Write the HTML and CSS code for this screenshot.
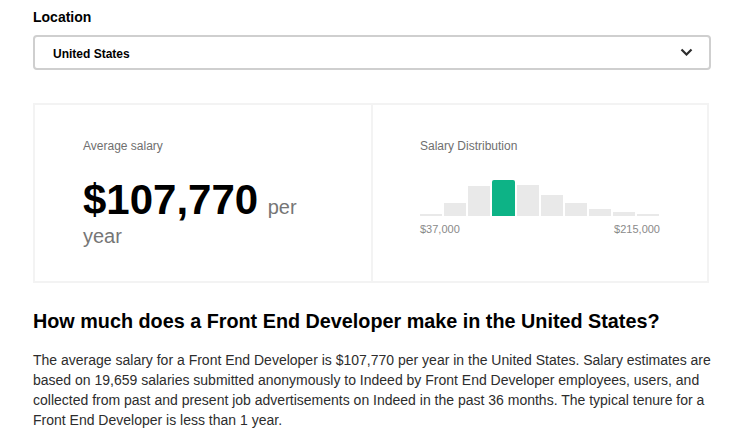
FILE: index.html
```html
<!DOCTYPE html>
<html>
<head>
<meta charset="utf-8">
<link rel="stylesheet" href="styles.css">
</head>
<body>
<div class="page">
  <div class="field">
    <div class="label">Location</div>
    <div class="select">
      <span class="select-value">United States</span>
      <svg class="chevron" width="13" height="8" viewBox="0 0 13 8"><path d="M1.5 1.5l5 5 5-5" fill="none" stroke="#2d2d2d" stroke-width="2.2"/></svg>
    </div>
  </div>

  <div class="card">
    <div class="panel">
      <div class="panel-title">Average salary</div>
      <div class="amount"><span class="amount-num">$107,770</span> <span class="amount-unit">per</span> <span class="amount-unit">year</span></div>
    </div>
    <div class="panel panel-right">
      <div class="panel-title">Salary Distribution</div>
      <div class="bars">
        <div class="bar" style="height:2px"></div>
        <div class="bar" style="height:13px"></div>
        <div class="bar" style="height:30px"></div>
        <div class="bar bar-active" style="height:36px"></div>
        <div class="bar" style="height:31px"></div>
        <div class="bar" style="height:21px"></div>
        <div class="bar" style="height:13px"></div>
        <div class="bar" style="height:7px"></div>
        <div class="bar" style="height:4px"></div>
        <div class="bar" style="height:2px"></div>
      </div>
      <div class="range"><span>$37,000</span><span>$215,000</span></div>
    </div>
  </div>

  <h2 class="heading">How much does a Front End Developer make in the United States?</h2>
  <p class="text">The average salary for a Front End Developer is $107,770 per year in the United States. Salary estimates are based on 19,659 salaries submitted anonymously to Indeed by Front End Developer employees, users, and collected from past and present job advertisements on Indeed in the past 36 months. The typical tenure for a Front End Developer is less than 1 year.</p>
</div>
</body>
</html>
```

FILE: styles.css
```css
* { box-sizing: border-box; }
body {
  margin: 0;
  background: #fff;
  font-family: "Liberation Sans", Arial, sans-serif;
  color: #2d2d2d;
}
.page {
  width: 678px;
  margin-left: 33px;
  padding-top: 8px;
}
.label {
  font-size: 14px;
  font-weight: bold;
  color: #000;
  line-height: 18px;
}
.select {
  margin-top: 9px;
  height: 35px;
  border: 2px solid #cfcfcf;
  border-radius: 4px;
  display: flex;
  align-items: center;
  justify-content: space-between;
  padding: 3px 16px 0 18px;
}
.select-value {
  font-size: 12px;
  font-weight: bold;
  color: #000;
}
.chevron { display: block; margin-top: -4px; }

.card {
  margin-top: 33px;
  height: 180px;
  width: 676px;
  border: 2px solid #f3f3f3;
  display: flex;
}
.panel {
  width: 338px;
  padding: 34px 48px 0 48px;
}
.panel-right {
  border-left: 2px solid #f3f3f3;
  padding-left: 47px;
  padding-right: 47px;
}
.panel-title {
  font-size: 12px;
  color: #6f6f6f;
  line-height: 14px;
}
.amount {
  margin-top: 32px;
  font-size: 20px;
  line-height: 29px;
  color: #767676;
}
.amount-num {
  font-size: 42px;
  font-weight: bold;
  color: #000;
  margin-right: 4px;
}
.bars {
  margin-top: 25px;
  height: 38px;
  display: flex;
  align-items: flex-end;
  gap: 2px;
}
.bar {
  width: 22px;
  background: #e9e9e9;
}
.bar-active {
  background: #0db386;
  width: 23px;
  border-radius: 2px 2px 0 0;
}
.range {
  margin-top: 7px;
  display: flex;
  justify-content: space-between;
  font-size: 11px;
  color: #8a8a8a;
  line-height: 13px;
}
.heading {
  margin: 26px 0 0 0;
  font-size: 19.8px;
  line-height: 24px;
  font-weight: bold;
  color: #000;
}
.text {
  margin: 17px 0 0 0;
  font-size: 14px;
  line-height: 20px;
  color: #2d2d2d;
}
```
